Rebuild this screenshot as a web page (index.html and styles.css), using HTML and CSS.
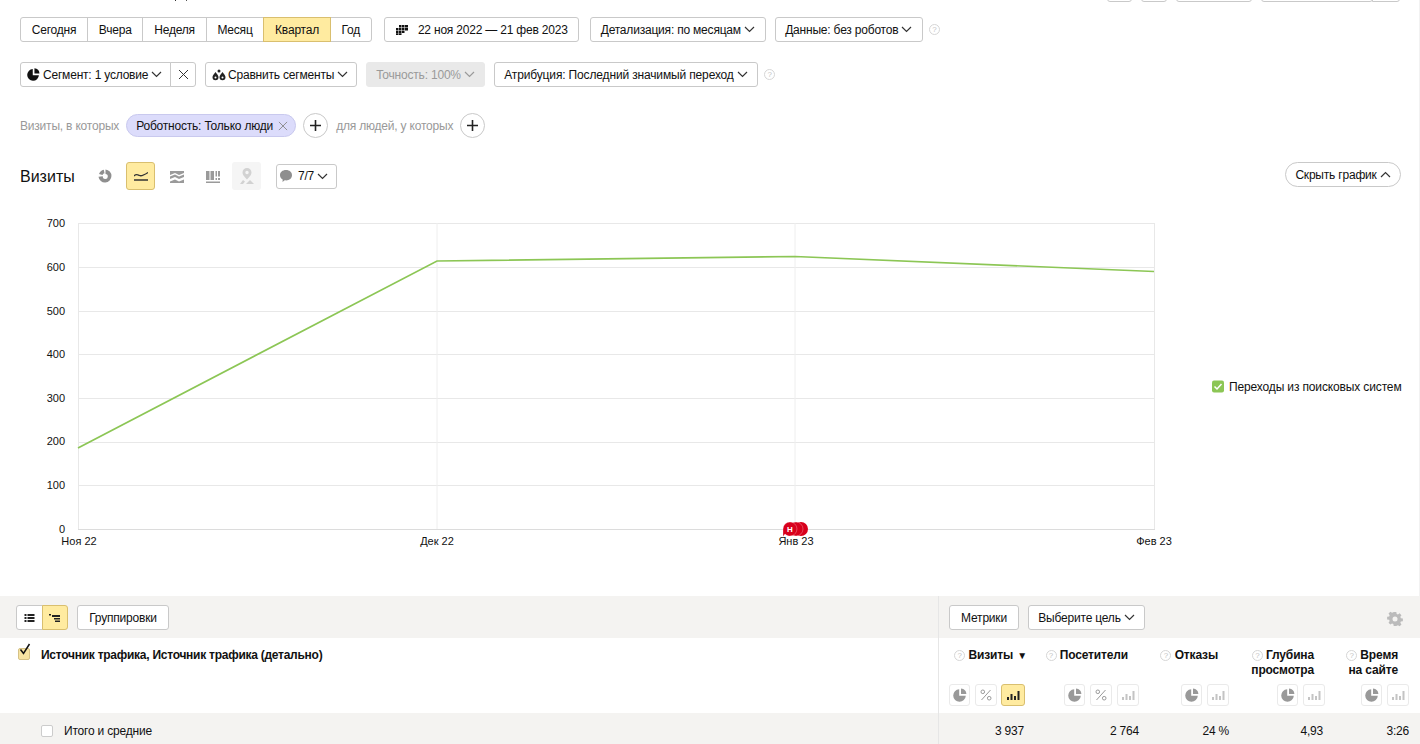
FILE: index.html
```html
<!DOCTYPE html>
<html lang="ru">
<head>
    <meta charset="UTF-8">
    <title>Источники, сводка</title>
    <link rel="stylesheet" href="styles.css">
</head>
<body>
    <svg class="defs" width="0" height="0">
        <symbol id="i-chevron" viewBox="0 0 11 7"><path d="M1 1l4.5 4.5L10 1" fill="none" stroke="currentColor" stroke-width="1.2"/></symbol>
        <symbol id="i-pie" viewBox="0 0 14 14"><path d="M6.2 1.2v6.6h6.6A6.3 6.3 0 1 1 6.2 1.2z" fill="currentColor"/><path d="M8 0.4A6 6 0 0 1 13.4 6H8z" fill="currentColor"/></symbol>
        <symbol id="i-bars" viewBox="0 0 14 12"><path d="M1 8h2v3H1zM4.5 5h2v6h-2zM8 7h2v4H8zM11.5 2h2v9h-2z" fill="currentColor"/></symbol>
        <symbol id="i-percent" viewBox="0 0 12 12"><path d="M10.5 1L1.5 11" stroke="currentColor" stroke-width="1" fill="none"/><circle cx="2.8" cy="2.8" r="1.8" fill="none" stroke="currentColor"/><circle cx="9.2" cy="9.2" r="1.8" fill="none" stroke="currentColor"/></symbol>
        <symbol id="i-close" viewBox="0 0 11 11"><path d="M1 1l9 9M10 1l-9 9" stroke="currentColor" stroke-width="1" fill="none"/></symbol>
        <symbol id="i-plus" viewBox="0 0 11 11"><path d="M5.5 0v11M0 5.5h11" stroke="currentColor" stroke-width="1.6" fill="none"/></symbol>
    </svg>

    <div class="upper">
        <div class="page-top">
            <span class="title-tail"></span>
            <div class="top-actions">
                <button class="btn top-btn w25"></button>
                <button class="btn top-btn w26"></button>
                <button class="btn top-btn w76"></button>
                <button class="btn top-btn w111"></button>
                <button class="btn top-btn w28 joined"></button>
            </div>
        </div>

        <div class="toolbar row-one">
            <div class="btn-group periods">
                <button class="btn">Сегодня</button>
                <button class="btn">Вчера</button>
                <button class="btn">Неделя</button>
                <button class="btn">Месяц</button>
                <button class="btn active">Квартал</button>
                <button class="btn">Год</button>
            </div>
            <button class="btn date-btn">
                <svg class="date-icon" viewBox="0 0 13 10"><path d="M4 0h2.500v2.500H4zM7 0h2.500v2.500H7zM10 0h3v2.500h-3zM1 3h2.500v2.500H1zM4 3h2.500v2.500H4zM7 3h2.500v2.500H7zM10 3h3v2.500h-3zM1 6h2.500v2H1zM4 6h2.500v2H4zM7 6h2.500v2H7zM1 8.300h2.500V10H1zM4 8.300h2.500V10H4z" fill="#111"/></svg>
                22 ноя 2022 — 21 фев 2023
            </button>
            <button class="btn drop detail-btn">Детализация: по месяцам <svg class="chevron"><use href="#i-chevron"/></svg></button>
            <button class="btn drop data-btn">Данные: без роботов <svg class="chevron"><use href="#i-chevron"/></svg></button>
            <span class="help">?</span>
        </div>

        <div class="toolbar row-two">
            <div class="btn-group">
                <button class="btn drop segment-btn">
                    <svg class="pie-small"><use href="#i-pie"/></svg>
                    Сегмент: 1 условие <svg class="chevron"><use href="#i-chevron"/></svg>
                </button>
                <button class="btn clear-btn"><svg class="close"><use href="#i-close"/></svg></button>
            </div>
            <button class="btn drop compare-btn">
                <svg class="drops" viewBox="0 0 14 12"><path d="M3.500 3C5 5 6.500 6.500 6.500 8.300a3 3 0 0 1-6 0C.5 6.500 2 5 3.500 3zM10.500 3c1.500 2 3 3.500 3 5.300a3 3 0 0 1-6 0c0-1.800 1.500-3.300 3-5.300z" fill="#222"/><circle cx="7" cy="2" r="1.500" fill="#222"/><circle cx="3.500" cy="8.500" r="1" fill="#fff"/><circle cx="10.500" cy="8.500" r="1" fill="#fff"/></svg>
                Сравнить сегменты <svg class="chevron"><use href="#i-chevron"/></svg>
            </button>
            <button class="btn drop disabled-btn">Точность: 100% <svg class="chevron"><use href="#i-chevron"/></svg></button>
            <button class="btn drop attr-btn">Атрибуция: Последний значимый переход <svg class="chevron"><use href="#i-chevron"/></svg></button>
            <span class="help">?</span>
        </div>

        <div class="toolbar row-three">
            <span class="muted">Визиты, в которых</span>
            <span class="pill">Роботность: Только люди <svg class="close"><use href="#i-close"/></svg></span>
            <button class="round-add"><svg class="plus"><use href="#i-plus"/></svg></button>
            <span class="muted">для людей, у которых</span>
            <button class="round-add"><svg class="plus"><use href="#i-plus"/></svg></button>
        </div>

        <div class="chart-head">
            <h2 class="chart-title">Визиты</h2>
            <div class="chart-types">
                <span class="type-btn">
                    <svg viewBox="0 0 14 14" class="type-icon donut"><path d="M7.500 .5a6.500 6.500 0 1 1-7 7.300l4.300-.5a2.500 2.500 0 1 0 2.700-2.300z" fill="#8f8f8f"/><path d="M5.800 .8l.7 3.500a3 3 0 0 0-2 1.700L1 5a6.500 6.500 0 0 1 4.800-4.200z" fill="#8f8f8f"/></svg>
                </span>
                <span class="type-btn active">
                    <svg viewBox="0 0 14 10" class="type-icon"><path d="M0 4.500c2-2.500 3.500-1.500 5.500-.5S9.500 4 14 1" fill="none" stroke="#333" stroke-width="1.300"/><path d="M0 8.500h14" stroke="#333" stroke-width="1.500"/></svg>
                </span>
                <span class="type-btn">
                    <svg viewBox="0 0 14 13" class="type-icon"><path d="M0 1h14v2L9 5 5 3 0 5zM0 6.500l5-2 4 2 5-2v2.500l-5 2-4-2-5 2zM0 11.500l5-2 4 2 5-2V13H0z" fill="#9a9a9a"/></svg>
                </span>
                <span class="type-btn">
                    <svg viewBox="0 0 14 13" class="type-icon"><path d="M0 1h3.500v9H0zM4.500 1H8v9H4.500zM9.500 1H11v5.500H9.500zM12 1h2v5.500h-2zM9.500 8H11v2H9.500zM12 8h2v2h-2zM0 11.500h14V13H0z" fill="#9a9a9a"/></svg>
                </span>
                <span class="type-btn geo">
                    <svg viewBox="0 0 14 16" class="type-icon geo-icon"><path d="M7 0a4.500 4.500 0 0 1 4.500 4.500C11.500 7.500 8 10 7 11.500 6 10 2.500 7.500 2.500 4.500A4.500 4.500 0 0 1 7 0zm0 2.800a1.700 1.700 0 1 0 0 3.400 1.700 1.700 0 0 0 0-3.400z" fill="#d2d2d2"/><path d="M0 16l3-4 2 1.500L3 16zM6 16l4-4 4 4z" fill="#d2d2d2"/></svg>
                </span>
            </div>
            <button class="btn drop notes-btn">
                <svg viewBox="0 0 14 14" class="note-icon"><path d="M7 1c3.600 0 6 2.200 6 5.200s-2.600 5.200-5.800 5.200c-.5 0-1 0-1.500-.1L3.500 13l.2-2.600C2 9.500 1 8 1 6.200 1 3.200 3.400 1 7 1z" fill="#8f8f8f"/></svg>
                7/7 <svg class="chevron"><use href="#i-chevron"/></svg>
            </button>
            <button class="btn hide-chart">Скрыть график <svg class="chevron flip"><use href="#i-chevron"/></svg></button>
        </div>

        <svg class="chart" viewBox="0 190 1420 406" width="1420" height="406">
            <g class="grid">
                <path d="M78.500 223.500H1154.500M78.500 267.500H1154.500M78.500 311.500H1154.500M78.500 354.500H1154.500M78.500 398.500H1154.500M78.500 442.500H1154.500M78.500 485.500H1154.500"/>
                <path d="M78.500 223V529M1154.500 223V529"/>
                <path class="soft" d="M437 223V529M795 223V529"/>
                <path class="axis" d="M78 529.500H1155"/>
            </g>
            <polyline class="series" points="78,448 437,261 795,256.500 1154,271.500"/>
            <g class="y-labels">
                <text x="65" y="227">700</text>
                <text x="65" y="271">600</text>
                <text x="65" y="315">500</text>
                <text x="65" y="358">400</text>
                <text x="65" y="402">300</text>
                <text x="65" y="445">200</text>
                <text x="65" y="489">100</text>
                <text x="65" y="533">0</text>
            </g>
            <g class="x-labels">
                <text x="79" y="545">Ноя 22</text>
                <text x="437" y="545">Дек 22</text>
                <text x="796" y="545">Янв 23</text>
                <text x="1154" y="545">Фев 23</text>
            </g>
            <g class="markers">
                <circle cx="801" cy="529" r="7"/>
                <circle class="edge" cx="796" cy="529" r="7"/>
                <path class="edge" d="M790 522a7 7 0 1 1-5 12l-2 2.500V529a7 7 0 0 1 7-7z"/>
                <text x="790" y="532">Н</text>
            </g>
            <rect class="legend-box" x="1212" y="380.500" width="12" height="12" rx="2"/>
            <path class="legend-check" d="M1214.500 386.500l2.500 2.500 4.500-5"/>
            <text class="legend-text" x="1229" y="391">Переходы из поисковых систем</text>
        </svg>
    </div>

    <div class="table">
        <div class="table-bar">
            <div class="bar-left">
                <div class="btn-group">
                    <button class="btn view-btn">
                        <svg viewBox="0 0 10 8" class="view-icon"><path d="M0 0h2v2H0zM3 0h7v2H3zM0 3h2v2H0zM3 3h7v2H3zM0 6h2v2H0zM3 6h7v2H3z" fill="#222"/></svg>
                    </button>
                    <button class="btn view-btn active">
                        <svg viewBox="0 0 11 8" class="view-icon"><path d="M0 0h2v1.500H0zM3 1h8v2H3zM5 4h6v1.500H5zM6 6.500h5V8H6z" fill="#222"/></svg>
                    </button>
                </div>
                <button class="btn group-btn">Группировки</button>
            </div>
            <div class="bar-right">
                <button class="btn metrics-btn">Метрики</button>
                <button class="btn drop goal-btn">Выберите цель <svg class="chevron"><use href="#i-chevron"/></svg></button>
                <svg viewBox="0 0 16 16" class="gear"><path d="M6.500 0h3l.4 2.200 1.500.6L13.300 1.500l2.100 2.100-1.300 1.900.6 1.500 2.300.5v3l-2.300.4-.6 1.500 1.300 1.900-2.100 2.100-1.900-1.300-1.500.6L9.500 16h-3l-.4-2.300-1.500-.6-1.900 1.300L.6 12.300l1.300-1.900-.6-1.500L-1 8.500v-3l2.300-.4.600-1.500L.6 1.700 2.700-.4l1.900 1.300 1.500-.6z" fill="#bbb" transform="translate(1 1) scale(.875)"/><circle cx="8" cy="8" r="2.500" fill="#f4f3f1"/></svg>
            </div>
        </div>

        <div class="table-head">
            <div class="dim-head">
                <span class="check checked">
                    <svg viewBox="0 0 13 14" class="check-mark"><path d="M2.500 6.500l3 4L11.500 1" fill="none" stroke="#111" stroke-width="1.500"/></svg>
                </span>
                <b class="dim-title">Источник трафика, Источник трафика (детально)</b>
            </div>
            <div class="metric-heads">
                <div class="metric sorted">
                    <div class="metric-name"><span class="q">?</span> Визиты <span class="sort">▼</span></div>
                    <div class="metric-tools">
                        <span class="tool"><svg class="tool-pie"><use href="#i-pie"/></svg></span>
                        <span class="tool wide"><svg class="tool-percent"><use href="#i-percent"/></svg></span>
                        <span class="tool wide on"><svg class="tool-bars"><use href="#i-bars"/></svg></span>
                    </div>
                </div>
                <div class="metric">
                    <div class="metric-name"><span class="q">?</span> Посетители</div>
                    <div class="metric-tools">
                        <span class="tool"><svg class="tool-pie"><use href="#i-pie"/></svg></span>
                        <span class="tool wide"><svg class="tool-percent"><use href="#i-percent"/></svg></span>
                        <span class="tool wide"><svg class="tool-bars light"><use href="#i-bars"/></svg></span>
                    </div>
                </div>
                <div class="metric">
                    <div class="metric-name"><span class="q">?</span> Отказы</div>
                    <div class="metric-tools">
                        <span class="tool"><svg class="tool-pie"><use href="#i-pie"/></svg></span>
                        <span class="tool wide"><svg class="tool-bars light"><use href="#i-bars"/></svg></span>
                    </div>
                </div>
                <div class="metric">
                    <div class="metric-name"><span class="q">?</span> Глубина<br>просмотра</div>
                    <div class="metric-tools">
                        <span class="tool"><svg class="tool-pie"><use href="#i-pie"/></svg></span>
                        <span class="tool wide"><svg class="tool-bars light"><use href="#i-bars"/></svg></span>
                    </div>
                </div>
                <div class="metric">
                    <div class="metric-name"><span class="q">?</span> Время<br>на сайте</div>
                    <div class="metric-tools">
                        <span class="tool"><svg class="tool-pie"><use href="#i-pie"/></svg></span>
                        <span class="tool wide"><svg class="tool-bars light"><use href="#i-bars"/></svg></span>
                    </div>
                </div>
            </div>
        </div>

        <div class="table-total">
            <div class="dim-total">
                <span class="check"></span>
                <span>Итого и средние</span>
            </div>
            <div class="metric-values">
                <span>3 937</span>
                <span>2 764</span>
                <span>24 %</span>
                <span>4,93</span>
                <span>3:26</span>
            </div>
        </div>
    </div>
</body>
</html>
```

FILE: styles.css
```css
html, body {
    margin: 0;
    height: 744px;
    overflow: hidden;
}
body {
    font-family: "Liberation Sans", Arial, sans-serif;
    font-size: 12px;
    letter-spacing: -0.2px;
    color: #111;
    background: #fff;
}
.defs {
    display: block;
    height: 0;
}
button {
    font-family: inherit;
    font-size: 12px;
    letter-spacing: inherit;
    color: #111;
}
.upper {
    height: 596px;
    box-sizing: border-box;
    border-right: 1px solid #f2f2f2;
}

/* top strip, scrolled almost out of view */
.page-top {
    height: 3px;
    overflow: hidden;
    display: flex;
    justify-content: space-between;
    padding: 0 19px 0 175px;
}
.title-tail {
    width: 10px;
    height: 1px;
    border-left: 1px solid #333;
    border-right: 1px solid #555;
}
.top-actions {
    display: flex;
    margin-top: -23px;
}
.top-btn {
    height: 25px;
    margin-left: 9px;
}
.w25 { width: 25px; }
.w26 { width: 26px; }
.w76 { width: 76px; }
.w111 { width: 112px; border-radius: 3px 0 0 3px; }
.w28 { width: 28px; }
.top-btn.joined {
    margin-left: -1px;
    border-radius: 0 3px 3px 0;
}

.btn {
    height: 25px;
    padding: 0 11px;
    background: #fff;
    border: 1px solid #c9c9c9;
    border-radius: 3px;
    display: inline-flex;
    align-items: center;
    justify-content: center;
    white-space: nowrap;
    box-sizing: border-box;
}
.btn.active {
    background: #ffeba0;
    border-color: #d9bf6f;
}
.btn-group {
    display: flex;
}
.btn-group .btn {
    border-radius: 0;
    margin-left: -1px;
}
.btn-group .btn:first-child {
    margin-left: 0;
    border-radius: 3px 0 0 3px;
}
.btn-group .btn:last-child {
    border-radius: 0 3px 3px 0;
}
.btn-group .btn.active {
    position: relative;
}
.periods .btn {
    padding: 0 10.75px;
}
.chevron {
    flex: none;
    width: 11px;
    height: 7px;
    margin-left: 3px;
    color: #333;
}
.chevron.flip {
    transform: rotate(180deg);
}
.help {
    width: 9px;
    height: 9px;
    border: 1px solid #d6d6d6;
    border-radius: 50%;
    color: #c4c4c4;
    font-size: 8px;
    line-height: 9px;
    text-align: center;
}

.toolbar {
    display: flex;
    align-items: center;
    padding: 0 20px;
    height: 25px;
}
.row-one { margin-top: 14px; }
.row-two { margin-top: 20px; }
.row-three { margin-top: 26px; }

.date-btn {
    width: 195px;
    margin-left: 12px;
}
.date-icon {
    flex: none;
    width: 13px;
    height: 10px;
    margin-right: 10px;
}
.detail-btn { width: 176px; margin-left: 11px; padding: 0; }
.data-btn { width: 148px; margin-left: 9px; padding: 0; }
.row-one .help { margin-left: 6px; }

.segment-btn {
    width: 151px;
    padding: 0 0 0 6px;
    justify-content: flex-start;
}
.pie-small {
    flex: none;
    width: 13px;
    height: 13px;
    margin-right: 3px;
    color: #111;
}
.clear-btn {
    width: 26px;
    padding: 0;
}
.close {
    flex: none;
    width: 11px;
    height: 11px;
    color: #333;
}
.compare-btn {
    width: 152px;
    margin-left: 9px;
    padding: 0 0 0 6px;
    justify-content: flex-start;
}
.drops {
    flex: none;
    width: 14px;
    height: 12px;
    margin-right: 2px;
}
.disabled-btn {
    width: 119px;
    margin-left: 9px;
    padding: 0;
    background: #e9e9e9;
    border-color: #e9e9e9;
    color: #9a9a9a;
}
.disabled-btn .chevron { color: #9a9a9a; }
.attr-btn {
    width: 264px;
    margin-left: 9px;
    padding: 0;
    letter-spacing: -0.15px;
}
.row-two .help { margin-left: 6px; }

.muted { color: #999; }
.pill {
    height: 23px;
    box-sizing: border-box;
    width: 170px;
    margin-left: 7px;
    padding-left: 9px;
    background: #dcdcfb;
    border: 1px solid #c9c9ee;
    border-radius: 12px;
    display: flex;
    align-items: center;
    white-space: pre;
}
.pill .close {
    width: 10px;
    height: 10px;
    margin-left: 2px;
    color: #888;
}
.round-add {
    width: 25px;
    height: 25px;
    padding: 0;
    margin: 0 8px 0 7px;
    background: #fff;
    border: 1px solid #c9c9c9;
    border-radius: 50%;
    display: flex;
    align-items: center;
    justify-content: center;
}
.plus {
    width: 11px;
    height: 11px;
    color: #222;
}

.chart-head {
    display: flex;
    align-items: center;
    height: 28px;
    margin-top: 24px;
    padding: 0 18px 0 20px;
}
.chart-title {
    margin: 0;
    padding-top: 1px;
    font-size: 16px;
    font-weight: normal;
    letter-spacing: 0;
    width: 70px;
}
.chart-types {
    display: flex;
    gap: 7px;
}
.type-btn {
    width: 29px;
    height: 28px;
    box-sizing: border-box;
    border: 1px solid transparent;
    border-radius: 3px;
    display: flex;
    align-items: center;
    justify-content: center;
}
.type-btn.active {
    background: #ffeba0;
    border-color: #d9bf6f;
}
.type-btn.geo {
    background: #f5f5f5;
    margin-left: -2px;
}
.type-icon {
    width: 14px;
    height: 13px;
}
.donut { height: 14px; }
.geo-icon { height: 16px; }
.notes-btn {
    width: 61px;
    margin-left: 15px;
    padding: 0 0 0 2px;
    justify-content: flex-start;
}
.note-icon {
    flex: none;
    width: 14px;
    height: 14px;
    margin-right: 5px;
}
.hide-chart {
    width: 116px;
    margin-left: auto;
    margin-top: -3px;
    padding: 0;
    border-radius: 13px;
}

.chart {
    display: block;
}
.grid path {
    fill: none;
    stroke: #e8e8e8;
    stroke-width: 1;
}
.grid .soft {
    stroke: #eeeeee;
}
.grid .axis {
    stroke: #dcdcdc;
}
.series {
    fill: none;
    stroke: #8cc655;
    stroke-width: 1.7;
}
.chart text {
    font-family: "Liberation Sans", Arial, sans-serif;
    font-size: 11px;
    letter-spacing: 0;
    fill: #111;
}
.y-labels text {
    text-anchor: end;
}
.x-labels text {
    text-anchor: middle;
}
.markers circle,
.markers path {
    fill: #d8001c;
}
.markers .edge {
    stroke: rgba(255, 255, 255, .45);
    stroke-width: .6;
}
.chart .markers text {
    font-size: 8px;
    font-weight: bold;
    fill: #fff;
    text-anchor: middle;
}
.legend-box {
    fill: #8cc655;
}
.legend-check {
    fill: none;
    stroke: #fff;
    stroke-width: 1.5;
}
.chart .legend-text {
    font-size: 12px;
    letter-spacing: -0.14px;
}

.table-bar {
    height: 42px;
    background: #f4f3f1;
    display: flex;
}
.bar-left {
    width: 939px;
    padding: 9px 0 0 16px;
    box-sizing: border-box;
    display: flex;
    gap: 9px;
    border-right: 1px solid #e6e6e6;
}
.bar-left .btn-group { height: 25px; }
.view-btn {
    width: 26.500px;
    padding: 0;
}
.view-icon {
    width: 11px;
    height: 8px;
}
.group-btn { width: 92px; padding: 0; }
.bar-right {
    flex: 1;
    padding: 9px 17px 0 10px;
    display: flex;
    gap: 9px;
}
.metrics-btn { width: 70px; padding: 0; }
.goal-btn { width: 117px; padding: 0; }
.gear {
    width: 16px;
    height: 16px;
    margin: 6px 0 0 auto;
}

.table-head {
    display: flex;
    height: 75px;
}
.dim-head {
    width: 939px;
    box-sizing: border-box;
    display: flex;
    padding: 10px 0 0 18px;
    border-right: 1px solid #e6e6e6;
}
.dim-title {
    margin-left: 11px;
    line-height: 15px;
    letter-spacing: -0.26px;
}
.check {
    width: 12px;
    height: 12px;
    box-sizing: border-box;
    border: 1px solid #ccc;
    border-radius: 2px;
    background: #fff;
    display: block;
    flex: none;
}
.check.checked {
    background: #f7e3a1;
    border-color: #d6c286;
    margin-top: 0;
    position: relative;
}
.check-mark {
    position: absolute;
    left: -1px;
    top: -6px;
    width: 13px;
    height: 14px;
}
.metric-heads,
.metric-values {
    flex: 1;
    display: grid;
    grid-template-columns: 86px 114px 90px 96px 84px;
}
.metric {
    display: flex;
    flex-direction: column;
    justify-content: space-between;
    align-items: flex-end;
    padding: 9px 0 7px;
    box-sizing: border-box;
}
.metric-name {
    font-weight: bold;
    font-size: 12px;
    letter-spacing: -0.15px;
    line-height: 15px;
    text-align: right;
    padding: 1px 11px 0 0;
    white-space: nowrap;
}
.sorted .metric-name {
    margin-right: -2px;
    padding-right: 0;
}
.sorted .metric-tools {
    gap: 4.500px;
}
.sort {
    font-size: 10px;
    margin-left: 1px;
    vertical-align: 0;
}
.q {
    display: inline-block;
    width: 9px;
    height: 9px;
    border: 1px solid #d6d6d6;
    border-radius: 50%;
    color: #c4c4c4;
    font-size: 8px;
    font-weight: normal;
    line-height: 9px;
    text-align: center;
    vertical-align: 1px;
}
.metric-tools {
    display: flex;
    gap: 5px;
}
.tool {
    width: 21px;
    height: 22px;
    box-sizing: border-box;
    border: 1px solid #eaeaea;
    border-radius: 3px;
    display: flex;
    align-items: center;
    justify-content: center;
    color: #999;
}
.tool.wide {
    width: 22px;
}
.tool.on {
    width: 24px;
    background: #ffeba0;
    border-color: #d9bf6f;
    color: #222;
}
.tool-pie {
    width: 14px;
    height: 14px;
}
.tool-percent {
    width: 12px;
    height: 12px;
}
.tool-bars {
    width: 14px;
    height: 12px;
}
.tool-bars.light {
    color: #c4c4c4;
}

.table-total {
    height: 31px;
    background: #f4f3f1;
    display: flex;
}
.dim-total {
    width: 939px;
    box-sizing: border-box;
    padding: 5px 0 0 41px;
    display: flex;
    align-items: center;
    gap: 11px;
    border-right: 1px solid #e6e6e6;
}
.metric-values span {
    text-align: right;
    line-height: 37px;
}
.metric-values span:nth-child(1) { padding-right: 1px; }
.metric-values span:nth-child(4) { padding-right: 2px; }
```
